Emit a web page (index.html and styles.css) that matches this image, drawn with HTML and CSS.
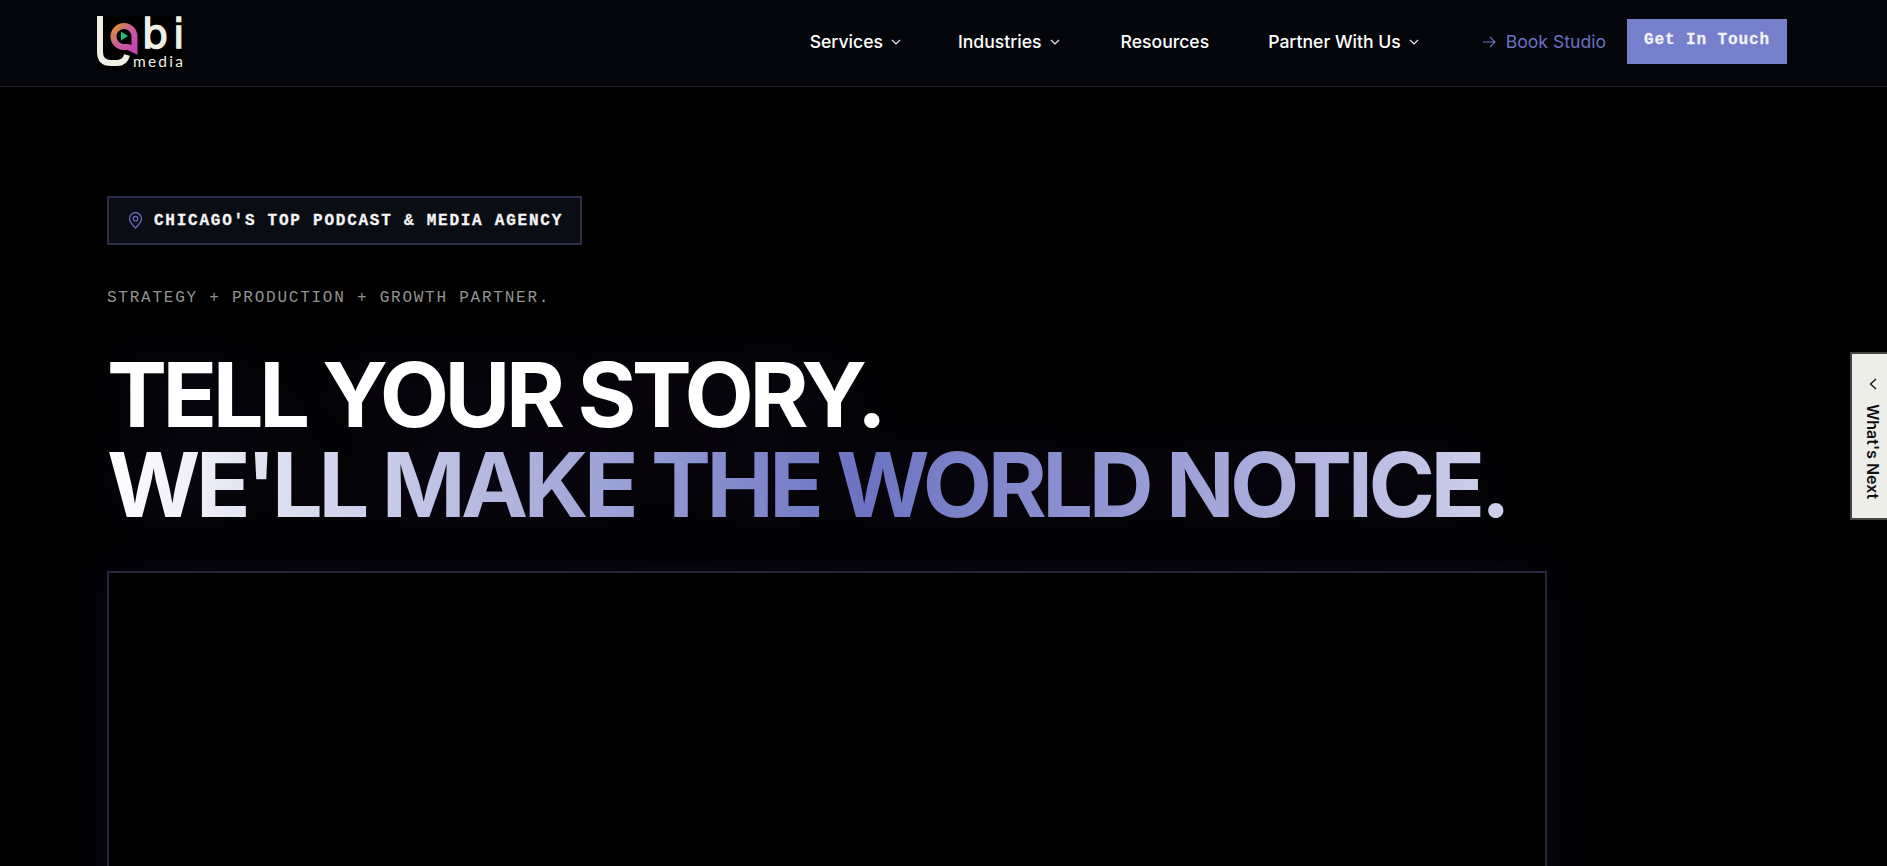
FILE: index.html
```html
<!DOCTYPE html>
<html lang="en">
<head>
    <meta charset="UTF-8">
    <meta name="viewport" content="width=device-width, initial-scale=1.0">
    <title>Labi Media</title>
    <link rel="stylesheet" href="styles.css">
</head>
<body>
    <header class="header">
        <a class="logo" href="#" aria-label="Labi Media">
            <svg width="92" height="72" viewBox="0 -8 92 72">
                <defs>
                    <linearGradient id="bubble" x1="0" y1="0" x2="1" y2="1">
                        <stop offset="0" stop-color="#e0912f"/>
                        <stop offset="0.45" stop-color="#c9609a"/>
                        <stop offset="1" stop-color="#c544b4"/>
                    </linearGradient>
                </defs>
                <rect x="2" y="2" width="87" height="54" fill="#000"/>
                <path d="M5 2V38Q5 49 16 49H22Q30 49 32 41" fill="none" stroke="#f0efe6" stroke-width="6"/>
                <path d="M29 12A10.500 10.500 0 0 1 39.500 22.500V36L33 33H29A10.500 10.500 0 0 1 29 12Z" fill="none" stroke="url(#bubble)" stroke-width="6"/>
                <path d="M26 17.500L33 22L26 26.500Z" fill="#1bbf80"/>
                <text class="logo-word" x="47 78" y="34">bi</text>
                <text class="logo-media" x="38" y="52.500">media</text>
            </svg>
        </a>
        <nav class="nav">
            <a class="nav-item" href="#">Services
                <svg class="chev" width="10" height="6" viewBox="0 0 10 6"><path d="M1 1L5 5L9 1"/></svg>
            </a>
            <a class="nav-item" href="#">Industries
                <svg class="chev" width="10" height="6" viewBox="0 0 10 6"><path d="M1 1L5 5L9 1"/></svg>
            </a>
            <a class="nav-item" href="#">Resources</a>
            <a class="nav-item" href="#">Partner With Us
                <svg class="chev" width="10" height="6" viewBox="0 0 10 6"><path d="M1 1L5 5L9 1"/></svg>
            </a>
        </nav>
        <a class="book" href="#">
            <svg width="14" height="12" viewBox="0 0 14 12"><path d="M1 6H13M8 1L13 6L8 11"/></svg>
            Book Studio
        </a>
        <a class="touch" href="#">Get In Touch</a>
    </header>

    <main class="hero">
        <div class="badge">
            <svg width="15" height="17" viewBox="0 0 15 17"><path d="M7.500 16C4 12.500 1.500 9.800 1.500 6.700A6 6 0 0 1 13.500 6.700C13.500 9.800 11 12.500 7.500 16Z"/><circle cx="7.500" cy="6.700" r="2.300"/></svg>
            <span>CHICAGO'S TOP PODCAST &amp; MEDIA AGENCY</span>
        </div>
        <p class="tagline">STRATEGY + PRODUCTION + GROWTH PARTNER.</p>
        <h1 class="title">
            <span class="line-white">TELL YOUR STORY.</span>
            <span class="line-grad">WE'LL MAKE THE WORLD NOTICE.</span>
        </h1>
        <div class="video"></div>
    </main>

    <button class="side-tab">
        <svg width="8" height="12" viewBox="0 0 8 12"><path d="M7 1L1.500 6L7 11"/></svg>
        <span>What's Next</span>
    </button>
</body>
</html>
```

FILE: styles.css
```css
html, body {
    height: 100vh;
}
body {
    margin: 0;
    overflow: hidden;
    position: relative;
    background-color: #000;
    font-family: Inter, "Liberation Sans", sans-serif;
    color: #fff;
}
a {
    color: inherit;
    text-decoration: none;
}

/* header */
.header {
    display: flex;
    align-items: center;
    height: 87px;
    padding: 0 100px 3px 95px;
    box-sizing: border-box;
    background-color: #05060c;
    border-bottom: 1px solid #23242a;
}
.logo {
    display: flex;
}
.logo-word {
    font-family: "DejaVu Sans", sans-serif;
    font-size: 41px;
    fill: #f0efe6;
    stroke: #f0efe6;
    stroke-width: 1.4;
}
.logo-media {
    font-family: Lato, sans-serif;
    font-size: 15.5px;
    letter-spacing: 2.2px;
    fill: #f0efe6;
}
.nav {
    display: flex;
    align-items: center;
    gap: 59px;
    margin-left: auto;
    margin-right: 63px;
}
.nav-item {
    display: flex;
    align-items: center;
    gap: 8px;
    font-size: 17.6px;
    font-weight: 500;
}
.nav-item:nth-child(1) {
    margin-right: -2px;
}
.nav-item:nth-child(2) {
    margin-right: 2px;
}
.chev path {
    fill: none;
    stroke: #e8e8ee;
    stroke-width: 1.2;
}
.book {
    display: flex;
    align-items: center;
    gap: 10px;
    font-size: 17.6px;
    color: #6a72c4;
}
.book path {
    fill: none;
    stroke: #6a72c4;
    stroke-width: 1.1;
}
.touch {
    display: flex;
    align-items: center;
    justify-content: center;
    width: 160px;
    height: 45px;
    margin-left: 21px;
    padding-bottom: 3px;
    box-sizing: border-box;
    background-color: #757fcb;
    font-family: "Liberation Mono", monospace;
    font-size: 16px;
    font-weight: 700;
    letter-spacing: 0.9px;
    color: #f2f2f8;
    -webkit-text-stroke: 0.3px #f2f2f8;
}

/* hero */
.hero {
    padding: 109px 0 0 107px;
}
.badge {
    display: inline-flex;
    align-items: center;
    gap: 11px;
    height: 49px;
    padding: 0 17px 0 19px;
    box-sizing: border-box;
    background-color: #0b0d14;
    border: 2px solid #2d2e4b;
    font-family: "Liberation Mono", monospace;
    font-size: 16px;
    font-weight: 700;
    letter-spacing: 1.76px;
    color: #f4f4f6;
    -webkit-text-stroke: 0.3px #f4f4f6;
}
.badge path, .badge circle {
    fill: none;
    stroke: #6a72c4;
    stroke-width: 1.2;
}
.tagline {
    margin: 44px 0 0;
    font-family: "Liberation Mono", monospace;
    font-size: 16px;
    letter-spacing: 1.76px;
    color: #939393;
}
.title {
    margin: 43px 0 0;
    font-size: 90px;
    font-weight: 700;
    line-height: 90px;
    letter-spacing: -0.05em;
    filter: drop-shadow(0 0 30px rgba(130, 90, 220, 0.14));
}
.title span {
    display: block;
    width: 1506px;
}
.line-white {
    color: #fff;
}
.line-grad {
    background: linear-gradient(90deg, #fff 0, #6b73c2 50%, #e0e0f2 100%);
    -webkit-background-clip: text;
    background-clip: text;
    color: transparent;
}
.video {
    width: 1436px;
    height: 806px;
    margin-top: 41px;
    background-color: #000;
    border: 2px solid #26253f;
    box-shadow: 0 0 50px rgba(110, 70, 220, 0.12);
}

/* side tab sits over the page */
.side-tab {
    position: absolute;
    top: 352px;
    right: 0;
    display: flex;
    flex-direction: column;
    align-items: center;
    gap: 14px;
    width: 37px;
    height: 168px;
    padding: 24px 0 0 6px;
    box-sizing: border-box;
    background-color: #eeeee8;
    border: 2px solid #444;
    border-right: 0;
    font-family: Inter, sans-serif;
    font-size: 16px;
    font-weight: 600;
    color: #111;
}
.side-tab span {
    writing-mode: vertical-rl;
}
.side-tab path {
    fill: none;
    stroke: #111;
    stroke-width: 1.3;
}
```
